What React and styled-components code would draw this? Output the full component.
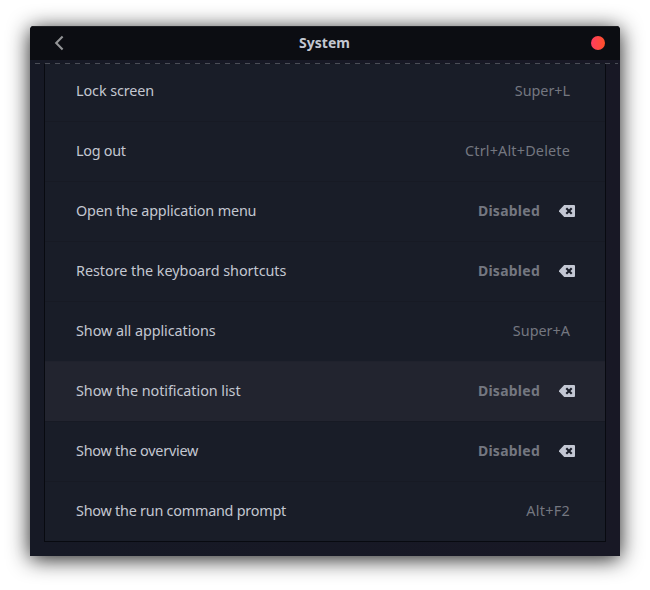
import React from 'react';
import styled, { createGlobalStyle } from 'styled-components';

const GlobalStyle = createGlobalStyle`
  * { box-sizing: border-box; }
  body { margin: 0; background: #fff; font-family: "Noto Sans", "Open Sans", sans-serif; }
`;

const Stage = styled.main`
  width: 650px;
  height: 590px;
  padding: 26px 30px 34px;
  overflow: hidden;
`;

const Window = styled.section`
  display: flex;
  flex-direction: column;
  height: 530px;
  overflow: hidden;
  border-radius: 4px 4px 0 0;
  background: linear-gradient(to right, #161925, #181825);
  box-shadow: 0 3px 21px rgba(0, 0, 0, 0.9);
`;

const TitleBar = styled.header`
  display: grid;
  grid-template-columns: 60px 1fr 60px;
  align-items: center;
  flex: none;
  height: 34px;
  background: #0c0d12;
  box-shadow: inset 0 1px #1e1f23;
`;

const BackButton = styled.button`
  display: flex;
  width: 10px;
  height: 16px;
  margin-left: 24px;
  padding: 0;
  border: 0;
  background: none;
  color: #949597;
`;

const Title = styled.h1`
  margin: 0 1px 0 0;
  color: #c3c7d1;
  font-size: 14px;
  font-weight: 700;
  line-height: 20px;
  text-align: center;
`;

const CloseButton = styled.button`
  justify-self: end;
  width: 14px;
  height: 14px;
  margin-right: 15px;
  padding: 0;
  border: 0;
  border-radius: 50%;
  background: linear-gradient(to right, #ff3d62, #ff5028);
`;

const ScrollEdge = styled.div`
  flex: none;
  height: 1px;
  margin: 3px 2px 0 5px;
  background: repeating-linear-gradient(to right, #4a4d56 0 5px, #151821 5px 10px);
`;

const List = styled.ul`
  flex: none;
  height: 478px;
  margin: 0 14px;
  padding: 0;
  list-style: none;
  border: solid #080a10;
  border-width: 0 1px 1px;
  background: #191d28;
`;

const Row = styled.li`
  display: flex;
  align-items: center;
  height: 60px;
  padding: 0 30px 0 31px;
  background: ${({ $active }) => ($active ? '#22242f' : 'transparent')};
  box-shadow: inset 0 1px ${({ $active }) => ($active ? '#20222d' : '#171a24')};

  &:first-child {
    height: 57px;
    padding-bottom: 3px;
    box-shadow: none;
  }
`;

const Name = styled.span`
  color: #c3c7d1;
  font-size: 14.4px;
  line-height: 20px;
  white-space: nowrap;
  letter-spacing: ${({ $spacing }) => $spacing}px;
`;

const Shortcut = styled.span`
  margin-left: auto;
  margin-right: ${({ $disabled }) => ($disabled ? 19 : 5)}px;
  color: #747780;
  font-size: ${({ $disabled }) => ($disabled ? 14 : 14.4)}px;
  font-weight: ${({ $disabled }) => ($disabled ? 700 : 400)};
  line-height: 20px;
  white-space: nowrap;
  letter-spacing: ${({ $spacing }) => $spacing}px;
`;

const ResetButton = styled.button`
  display: flex;
  padding: 0;
  border: 0;
  background: none;
  color: #c3c7d3;
`;

const BackIcon = () => (
  <svg width="10" height="16" viewBox="0 0 10 16" fill="none" stroke="currentColor" strokeWidth="2.1">
    <path d="M8.6 1.4 2.2 8l6.4 6.6" />
  </svg>
);

const EraseIcon = () => (
  <svg width="16" height="12" viewBox="0 0 16 12">
    <path fill="currentColor" d="M5.2 0H15q1 0 1 1v10q0 1-1 1H5.2L0 6.6V5.4Z" />
    <path d="m7.3 3.3 5.4 5.4m0-5.4-5.4 5.4" stroke="#191d28" strokeWidth="2.1" />
  </svg>
);

const shortcuts = [
  { name: 'Lock screen', spacing: -0.09, keys: 'Super+L', keySpacing: -0.05 },
  { name: 'Log out', spacing: -0.28, keys: 'Ctrl+Alt+Delete', keySpacing: 0.18 },
  { name: 'Open the application menu', spacing: -0.17 },
  { name: 'Restore the keyboard shortcuts', spacing: -0.04 },
  { name: 'Show all applications', spacing: -0.07, keys: 'Super+A' },
  { name: 'Show the notification list', spacing: -0.06, active: true },
  { name: 'Show the overview', spacing: -0.24 },
  { name: 'Show the run command prompt', spacing: -0.24, keys: 'Alt+F2', keySpacing: 0.3 },
];

export default function App() {
  return (
    <>
      <GlobalStyle />
      <Stage>
        <Window>
          <TitleBar>
            <BackButton aria-label="Back"><BackIcon /></BackButton>
            <Title>System</Title>
            <CloseButton aria-label="Close" />
          </TitleBar>
          <ScrollEdge />
          <List>
            {shortcuts.map(({ name, keys, active, spacing = 0, keySpacing = 0 }) => (
              <Row key={name} $active={active}>
                <Name $spacing={spacing}>{name}</Name>
                <Shortcut $disabled={!keys} $spacing={keys ? keySpacing : 0.25}>{keys || 'Disabled'}</Shortcut>
                {!keys && <ResetButton aria-label="Reset shortcut"><EraseIcon /></ResetButton>}
              </Row>
            ))}
          </List>
        </Window>
      </Stage>
    </>
  );
}
